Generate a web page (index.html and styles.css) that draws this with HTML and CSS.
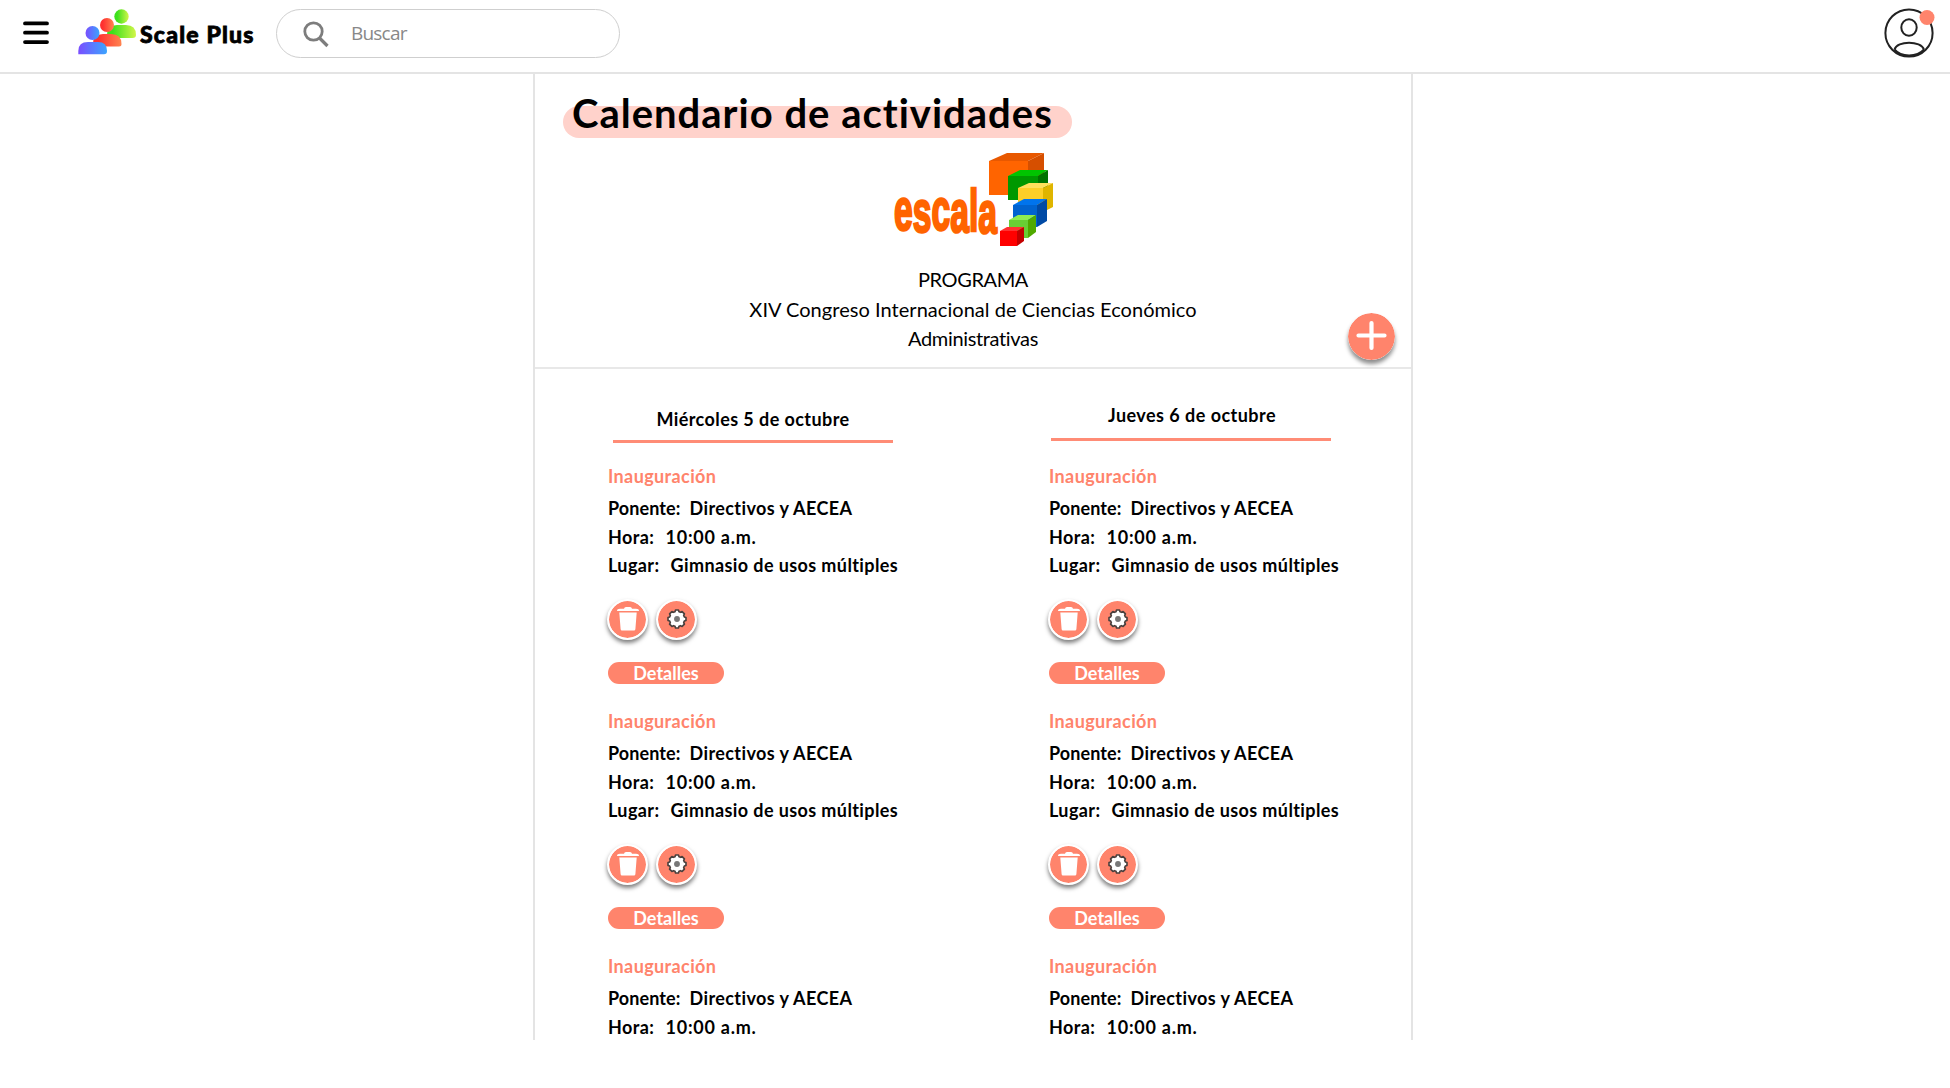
FILE: index.html
```html
<!DOCTYPE html>
<html lang="es">
<head>
<meta charset="utf-8">
<title>Scale Plus</title>
<link rel="stylesheet" href="styles.css">
</head>
<body>
<svg class="defs" width="0" height="0" aria-hidden="true">
  <symbol id="trash" viewBox="0 0 24 26"><path d="M1 5Q1 2.700 4 2.700H8Q8.300 1 10 1H14Q15.700 1 16 2.700H20Q23 2.700 23 5ZM3.300 6.500H20.700L19.400 23Q19.300 24.500 18 24.500H6Q4.700 24.500 4.600 23Z" fill="#fff"/></symbol>
  <symbol id="gear" viewBox="0 0 24 24"><path d="M9.800 4L10.400 2.200H13.600L14.200 4L15.900 4.700L17.600 3.900L20.100 6.400L19.300 8.100L20 9.800L21.800 10.400V13.600L20 14.200L19.300 15.900L20.100 17.600L17.600 20.100L15.900 19.300L14.200 20L13.600 21.800H10.400L9.800 20L8.100 19.300L6.400 20.100L3.900 17.600L4.700 15.900L4 14.200L2.200 13.600V10.400L4 9.800L4.700 8.100L3.900 6.400L6.400 3.900L8.100 4.700Z" fill="#fff" stroke="#4a403e" stroke-width="1.800" stroke-linejoin="round"/><circle cx="12" cy="12" r="3.200" fill="#777"/></symbol>
</svg>
<header class="topbar">
  <svg class="menu" width="28" height="24" viewBox="0 0 28 24" stroke="#000" stroke-width="3.800" stroke-linecap="round"><path d="M3 3.400H25M3 12.700H25M3 22.100H25"/></svg>
  <svg class="logo" width="60" height="48" viewBox="0 0 60 48">
    <defs>
      <linearGradient id="g"><stop offset="0.200" stop-color="#3de01c"/><stop offset="1" stop-color="#d2f64a"/></linearGradient>
      <linearGradient id="r"><stop offset="0.200" stop-color="#ff3130"/><stop offset="1" stop-color="#ff8450"/></linearGradient>
      <linearGradient id="b"><stop offset="0" stop-color="#7a4dff"/><stop offset="1" stop-color="#3aa5ff"/></linearGradient>
    </defs>
    <circle cx="43.500" cy="8.500" r="7.200" fill="url(#g)"/><path d="M29 30V27Q29 17 39 17H48Q58 17 58 27Q58 30 54.500 30Z" fill="url(#g)"/>
    <circle cx="29" cy="17" r="7" fill="url(#r)"/><path d="M15 38.500V36Q15 26 25 26H33Q43.500 26 43.500 36Q43.500 38.500 41 38.500Z" fill="url(#r)"/>
    <circle cx="14.500" cy="25" r="7" fill="url(#b)"/><path d="M.3 46.200V43Q.3 34 10 34H20Q29 34 29 43Q29 46.200 26 46.200Z" fill="url(#b)"/>
  </svg>
  <span class="brand">Scale Plus</span>
  <div class="search">
    <svg width="26" height="28" viewBox="0 0 26 28" fill="none" stroke="#7d7d7d"><circle cx="10.500" cy="10.500" r="8.700" stroke-width="2.800"/><path d="M16.500 17L24.500 25" stroke-width="3.200"/></svg>
    <span>Buscar</span>
  </div>
  <svg class="avatar" width="52" height="52" viewBox="0 0 52 52" fill="none" stroke="#222" stroke-width="2">
    <circle cx="25" cy="27" r="23.600"/><ellipse cx="25" cy="21.500" rx="7.700" ry="8.300"/>
    <path d="M10.500 43.500C13 34.500 37 34.500 40 43.500M10.500 43.500C17 51.500 33 51.500 40 43.500"/>
    <circle cx="43" cy="11.500" r="7.500" fill="#ff846c" stroke="none"/>
  </svg>
</header>
<main class="panel">
  <section class="intro">
    <h1>Calendario de actividades</h1>
    <svg class="escala" width="170" height="100" viewBox="890 150 170 100">
      <path d="M989 161L1007 153H1044L1028 161Z" fill="#e85800"/><path d="M1028 161L1044 153V187L1028 195Z" fill="#d64f00"/><path d="M989 161H1028V195H989Z" fill="#ff6400"/>
      <path d="M1008 176L1020 170H1048L1038 176Z" fill="#00c400"/><path d="M1038 176L1048 170V193L1038 200Z" fill="#007300"/><path d="M1008 176H1038V200H1008Z" fill="#009800"/>
      <path d="M1018 188L1029 183H1053L1043 188Z" fill="#ffe05c"/><path d="M1043 188L1053 183V207L1043 212Z" fill="#dfb500"/><path d="M1018 188H1043V212H1018Z" fill="#fccf28"/>
      <path d="M1013 205L1024 199H1047L1037 205Z" fill="#0074ed"/><path d="M1037 205L1047 199V221L1037 227Z" fill="#004aa5"/><path d="M1013 205H1037V227H1013Z" fill="#0063cf"/>
      <path d="M1009 220L1018 215H1036L1028 220Z" fill="#8dec50"/><path d="M1028 220L1036 215V232L1028 238Z" fill="#50a900"/><path d="M1009 220H1028V238H1009Z" fill="#68cf34"/>
      <path d="M1000 231L1007 227H1024L1017 231Z" fill="#ff3030"/><path d="M1017 231L1024 227V241L1017 246Z" fill="#c40000"/><path d="M1000 231H1017V246H1000Z" fill="#f00"/>
      <text class="escala-text" x="894" y="231" dy="-1 2 -2 2 -1 2" textLength="103" lengthAdjust="spacingAndGlyphs">escala</text>
    </svg>
    <p class="kicker">PROGRAMA</p>
    <p>XIV Congreso Internacional de Ciencias Económico</p>
    <p class="tight">Administrativas</p>
    <svg class="add" width="47" height="47" viewBox="0 0 47 47"><circle cx="23.500" cy="23.500" r="23.500" fill="#ff846c"/><path d="M10.500 22.500H36.500M23.500 10V35" stroke="#fff" stroke-width="4.200" stroke-linecap="round"/></svg>
  </section>
  <section class="days">
    <div class="day">
      <h2>Miércoles 5 de octubre</h2>
      <article>
        <h3>Inauguración</h3>
        <dl><div><dt class="who">Ponente:</dt><dd>Directivos y AECEA</dd></div><div><dt class="hour">Hora:</dt><dd class="time">10:00 a.m.</dd></div><div><dt class="place">Lugar:</dt><dd>Gimnasio de usos múltiples</dd></div></dl>
        <div class="actions"><span class="round"><svg width="24" height="26"><use href="#trash"/></svg></span><span class="round"><svg width="22" height="22"><use href="#gear"/></svg></span></div>
        <div class="details">Detalles</div>
      </article>
      <article>
        <h3>Inauguración</h3>
        <dl><div><dt class="who">Ponente:</dt><dd>Directivos y AECEA</dd></div><div><dt class="hour">Hora:</dt><dd class="time">10:00 a.m.</dd></div><div><dt class="place">Lugar:</dt><dd>Gimnasio de usos múltiples</dd></div></dl>
        <div class="actions"><span class="round"><svg width="24" height="26"><use href="#trash"/></svg></span><span class="round"><svg width="22" height="22"><use href="#gear"/></svg></span></div>
        <div class="details">Detalles</div>
      </article>
      <article>
        <h3>Inauguración</h3>
        <dl><div><dt class="who">Ponente:</dt><dd>Directivos y AECEA</dd></div><div><dt class="hour">Hora:</dt><dd class="time">10:00 a.m.</dd></div></dl>
      </article>
    </div>
    <div class="day thursday">
      <h2>Jueves 6 de octubre</h2>
      <article>
        <h3>Inauguración</h3>
        <dl><div><dt class="who">Ponente:</dt><dd>Directivos y AECEA</dd></div><div><dt class="hour">Hora:</dt><dd class="time">10:00 a.m.</dd></div><div><dt class="place">Lugar:</dt><dd>Gimnasio de usos múltiples</dd></div></dl>
        <div class="actions"><span class="round"><svg width="24" height="26"><use href="#trash"/></svg></span><span class="round"><svg width="22" height="22"><use href="#gear"/></svg></span></div>
        <div class="details">Detalles</div>
      </article>
      <article>
        <h3>Inauguración</h3>
        <dl><div><dt class="who">Ponente:</dt><dd>Directivos y AECEA</dd></div><div><dt class="hour">Hora:</dt><dd class="time">10:00 a.m.</dd></div><div><dt class="place">Lugar:</dt><dd>Gimnasio de usos múltiples</dd></div></dl>
        <div class="actions"><span class="round"><svg width="24" height="26"><use href="#trash"/></svg></span><span class="round"><svg width="22" height="22"><use href="#gear"/></svg></span></div>
        <div class="details">Detalles</div>
      </article>
      <article>
        <h3>Inauguración</h3>
        <dl><div><dt class="who">Ponente:</dt><dd>Directivos y AECEA</dd></div><div><dt class="hour">Hora:</dt><dd class="time">10:00 a.m.</dd></div></dl>
      </article>
    </div>
  </section>
</main>
</body>
</html>
```
FILE: styles.css
```css
* { box-sizing: border-box; }
body { margin: 0; background: #fff; color: #000; font-family: Lato, sans-serif; white-space: nowrap; }
.defs { position: absolute; }
h1, h2, h3, p, dl, dd { margin: 0; }

.topbar { display: flex; align-items: flex-start; height: 74px; border-bottom: 2px solid #e4e4e4; }
.menu { margin: 20px 0 0 22px; }
.logo { margin: 8px 0 0 28px; }
.brand { width: 136px; margin: 19px 0 0 2px; font: 900 23px/30px Lato, sans-serif; letter-spacing: 1.2px; -webkit-text-stroke: .8px #000; }
.search { display: flex; gap: 22px; width: 344px; height: 49px; margin-top: 9px; padding: 11px 0 0 26px; border: 1px solid #cfcfcf; border-radius: 25px; color: #888; font: 19px/25px "Open Sans", sans-serif; letter-spacing: -.8px; }
.avatar { margin: 6px 14px 0 auto; }

.panel { width: 880px; height: 966px; margin-left: 533px; border: solid #e4e4e4; border-width: 0 2px; overflow: hidden; }
.intro { position: relative; height: 295px; padding-top: 32px; border-bottom: 2px solid #e8e8e8; }
h1 { width: 509px; height: 32px; margin-left: 28px; padding-left: 9px; border-radius: 16px; background: #ffd2cb; font-size: 40px; line-height: 15px; font-weight: 700; letter-spacing: 1px; }
.escala { display: block; margin: 12px 0 15px 355px; }
.escala-text { font: 700 59px "Liberation Sans", sans-serif; fill: #ff6400; stroke: #ff6400; stroke-width: 2.6px; }
p { text-align: center; font-size: 20px; line-height: 29.6px; letter-spacing: .04px; }
.kicker { letter-spacing: -.4px; }
.tight { letter-spacing: -.35px; }
.add { position: absolute; left: 813px; top: 239px; border-radius: 50%; box-shadow: 0 4px 4px rgba(0, 0, 0, .45); }

.days { display: grid; grid-template-columns: 441px 1fr; padding-left: 73px; }
h2 { width: 280px; height: 74px; margin: 0 0 15px 5px; padding-top: 40px; border-bottom: 3px solid #ff8c76; font-size: 18px; line-height: 20px; font-weight: 700; letter-spacing: .42px; text-align: center; }
.thursday h2 { height: 72px; margin: 0 0 17px 2px; padding: 36px 0 0 2px; letter-spacing: .46px; }
article { height: 245px; }
h3 { padding-top: 1px; margin-bottom: 1px; color: #ff846c; font-size: 18px; line-height: 34px; font-weight: 700; letter-spacing: .38px; }
dl { font-size: 18px; line-height: 28.5px; font-weight: 700; letter-spacing: .4px; }
dl > div { display: flex; }
.who { width: 81.5px; letter-spacing: .1px; }
.hour { width: 57.5px; }
.place { width: 62.5px; }
.time { letter-spacing: .75px; }
.actions { display: flex; gap: 8px; margin: 19px 0 0 -1px; }
.round { display: grid; place-items: center; width: 41px; height: 41px; border: 2px solid #fff; border-radius: 50%; background: #ff846c; background-clip: padding-box; box-shadow: 0 3px 4px rgba(0, 0, 0, .5); }
.details { width: 116px; height: 22px; margin-top: 22px; border-radius: 11px; background: #ff846c; color: #fff; font-size: 18px; line-height: 22px; font-weight: 700; text-align: center; }
```
